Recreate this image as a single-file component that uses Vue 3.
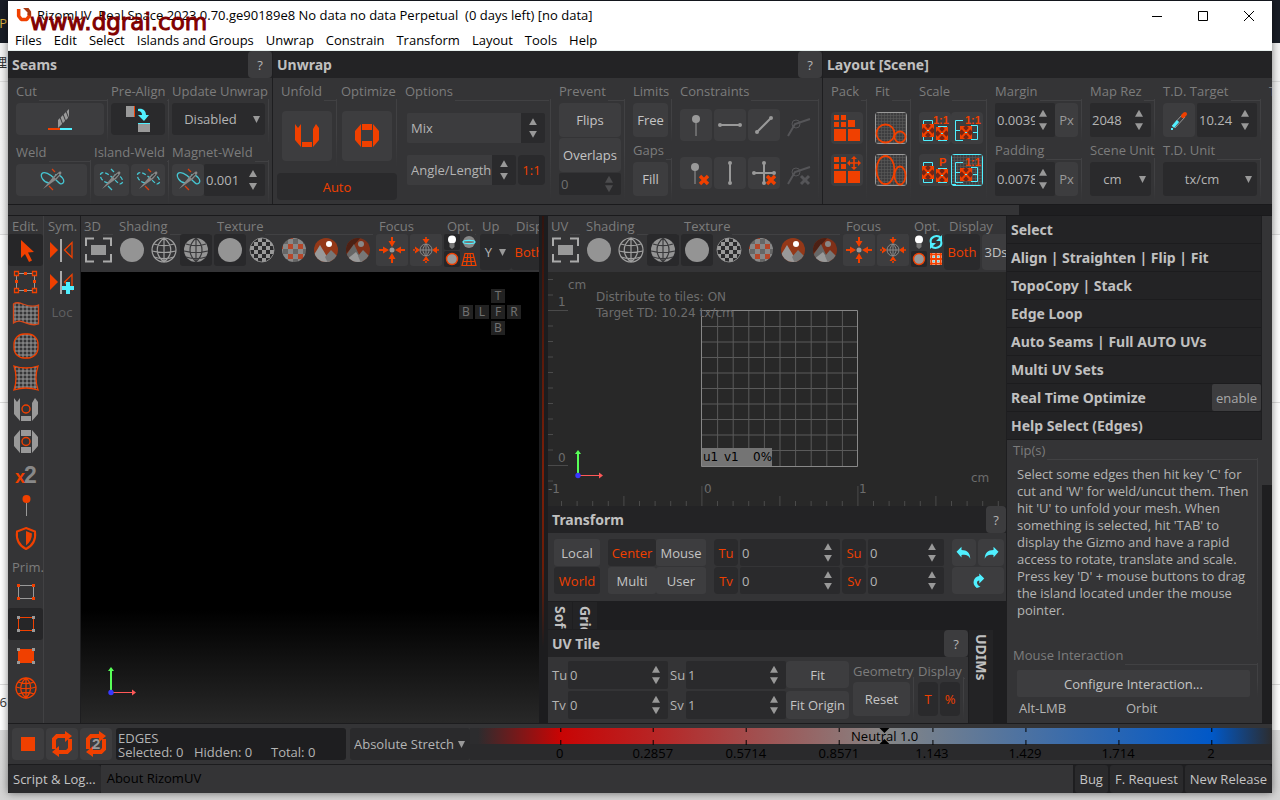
<script setup>
import { h, ref } from 'vue'

const Ico = (p) => h('svg', { class: 'ic', viewBox: p.box || '0 0 32 32', 'aria-hidden': 'true' }, [h('use', { href: '#' + p.n })])
Ico.props = ['n', 'box']

const Spin = (p) => h('div', { class: 'spin' }, [
  h('input', { type: 'text', id: p.id, value: p.value, 'aria-label': p.label, disabled: p.off }),
  h('span', { class: 'arr' }, [
    h('button', { class: 'up', 'aria-label': p.label + ' up', disabled: p.off }),
    h('button', { class: 'down', 'aria-label': p.label + ' down', disabled: p.off })
  ])
])
Spin.props = ['id', 'value', 'label', 'off']

const Drop = (p) => h('div', { class: 'drop' }, [
  h('select', { id: p.id, 'aria-label': p.label }, [h('option', p.value)]),
  h('span', { class: 'tri' })
])
Drop.props = ['id', 'value', 'label']

const menus = ['Files', 'Edit', 'Select', 'Islands and Groups', 'Unwrap', 'Constrain', 'Transform', 'Layout', 'Tools', 'Help']
const constraints = [
  ['c-pin', 'Pin'], ['c-hor', 'Horizontal'], ['c-diag', 'Straight'], ['c-ang', 'Angle'],
  ['c-pinx', 'Unpin'], ['c-ver', 'Vertical'], ['c-crossx', 'Clear'], ['c-angx', 'Clear angle']
]
const editTools = ['t-arrow', 't-box', 't-flag', 't-round', 't-pinch', 't-unfold', 't-opt', 't-x2', 't-pin', 't-shield']
const primTools = ['p-vert', 'p-edge', 'p-face', 'p-globe']
const shading = ['s-solid', 's-wire', 's-both']
const texture = ['s-solid', 'x-check', 'x-color', 'x-img', 'x-img2']
const sections = ['Select', 'Align | Straighten | Flip | Fit', 'TopoCopy | Stack', 'Edge Loop', 'Auto Seams | Full AUTO UVs', 'Multi UV Sets']
const views = [
  { key: '3D', up: true, opts: ['o-lamp', 'o-ring', 'o-ball', 'o-persp'] },
  { key: 'UV', up: false, opts: ['o-lamp', 'o-sync', 'o-ball', 'o-grid'] }
]
const ticks = ['0', '0.2857', '0.5714', '0.8571', '1.143', '1.429', '1.714', '2'].map((t, i) => ({ t, left: 11.2 + i * 11.6 + '%' }))
const lines = Array.from({ length: 9 }, (_, i) => i + 1)
const rulerX = Array.from({ length: 29 }, (_, i) => i)
const rulerY = Array.from({ length: 14 }, (_, i) => i)
const tip = ref("Select some edges then hit key 'C' for cut and 'W' for weld/uncut them. Then hit 'U' to unfold your mesh. When something is selected, hit 'TAB' to display the Gizmo and have a rapid access to rotate, translate and scale. Press key 'D' + mouse buttons to drag the island located under the mouse pointer.")
</script>

<template>
  <div class="desk">
    <svg class="defs" width="0" height="0" aria-hidden="true">
      <defs>
        <pattern id="mesh" width="3" height="3" patternUnits="userSpaceOnUse"><path d="M0 .5H3M.5 0V3" stroke="#5a5a5a" stroke-width=".6" /></pattern>
        <pattern id="mesh4" width="4" height="4" patternUnits="userSpaceOnUse"><path d="M0 1H4M1 0V4" stroke="#999" stroke-width="1" /></pattern>
        <pattern id="chk" width="8" height="8" patternUnits="userSpaceOnUse"><rect width="8" height="8" fill="#2a2a2c" /><path d="M0 0h4v4h-4zM4 4h4v4h-4z" fill="#999" /></pattern>
        <pattern id="chk2" width="10" height="10" patternUnits="userSpaceOnUse"><rect width="10" height="10" fill="#888" /><path d="M0 0h5v5h-5z" fill="#b5472a" /><path d="M5 5h5v5h-5z" fill="#666" /></pattern>
        <clipPath id="disc"><circle cx="16" cy="16" r="12" /></clipPath>

        <g id="logo"><path d="M3 1v8l3 4h6l3-4V6" fill="none" stroke="#f04000" stroke-width="4" stroke-linejoin="bevel" /><path d="M8 0h6l3 4v5l-4-1V5z" fill="#a83810" /></g>
        <g id="knife"><path d="M14 17 25 6v8L14 25z" fill="#999" /><path d="M16 14l3 8M19 11l3 8M22 8l3 8" stroke="#3c3c3e" stroke-width="1" /><path d="M4 25h12v2H4z" fill="#f04000" /><path d="M16 25h12v2H16z" fill="#50f0ff" /></g>
        <g id="align"><path d="M4 3h8v11H4z" fill="#999" /><path d="M12 3h1v11h-1z" fill="#f04000" /><path d="M16 6c5-1 8 2 8 6h3l-5 6-6-6h4c0-2-1-4-4-4z" fill="#50f0ff" /><path d="M16 20h12v1H16z" fill="#50f0ff" /><path d="M16 21h12v8H16z" fill="#999" /></g>
        <g id="needle"><path d="M7 25 18 12l5-4c2-1 3 0 2 2l-4 5z" fill="#888" /><path d="M19 14l4-4" stroke="#38383a" stroke-width="1.200" /></g>
        <g id="weld"><path d="M13 19C7 18 4 12 6 9.500S14 10 19 15s6 6 8 4-1-9-8-8" fill="none" stroke="#46c4d0" stroke-width="1.300" /><path d="M16 5l3 3M13 22l4 4" stroke="#d84010" stroke-width="1.300" /><use href="#needle" /></g>
        <g id="weldc"><path d="M13 19C7 18 4 12 6 9.500S14 10 19 15s6 6 8 4-1-9-8-8" fill="none" stroke="#46c4d0" stroke-width="1.300" stroke-dasharray="4 2" /><path d="M16 5l3 3M13 22l4 4" stroke="#46c4d0" stroke-width="1.300" /><use href="#needle" /></g>
        <g id="weldo"><path d="M13 19C7 18 4 12 6 9.500S14 10 19 15s6 6 8 4-1-9-8-8" fill="none" stroke="#46c4d0" stroke-width="1.300" stroke-dasharray="4 2" /><path d="M16 5l3 3M13 22l4 4" stroke="#d84010" stroke-width="1.300" /><use href="#needle" /></g>
        <g id="unfold"><path d="M4 4l3 4 3-4v23l-6-7zM28 8l-3-4-3 5v18l6-7zM11 22h10v5H11z" /></g>
        <g id="optim"><path d="M4 11l6-7v23l-6-7zM28 11l-6-7v23l6-7zM11 4h10v6H11zM11 21h10v6H11z" /></g>
        <g id="xmark"><path d="M19 19l8 8M27 19l-8 8" stroke="#f04000" stroke-width="3.4" /></g>
        <g id="c-pin"><circle cx="16" cy="10" r="4" fill="#999" /><path d="M16 13v14" stroke="#999" /></g>
        <g id="c-hor"><path d="M6 16h20" stroke="#999" stroke-width="2" /><circle cx="6" cy="16" r="2" fill="#999" /><circle cx="26" cy="16" r="2" fill="#999" /></g>
        <g id="c-ver"><path d="M16 6v20" stroke="#999" stroke-width="2" /><circle cx="16" cy="6" r="2" fill="#999" /><circle cx="16" cy="26" r="2" fill="#999" /></g>
        <g id="c-diag"><path d="M9 23 23 9" stroke="#999" stroke-width="2" /><circle cx="9" cy="23" r="2" fill="#999" /><circle cx="23" cy="9" r="2" fill="#999" /></g>
        <g id="c-ang"><path d="M6 27 13 15l15-5" fill="none" stroke="#555558" stroke-width="2" /><circle cx="14" cy="15" r="4" fill="none" stroke="#555558" /></g>
        <g id="c-pinx"><use href="#c-pin" x="-1" /><use href="#xmark" x="1" /></g>
        <g id="c-crossx"><use href="#c-hor" /><use href="#c-ver" /><use href="#xmark" /></g>
        <g id="c-angx"><use href="#c-ang" /><path d="M19 19l8 8M27 19l-8 8" stroke="#555558" stroke-width="3" /></g>
        <g id="k-pack"><path d="M3 3h5v5H3zM10 3h5v5h-5zM3 10h5v5H3zM10 10h5v5h-5zM17 8h7v7h-7zM3 17h12v12H3zM17 17h12v12H17z" fill="#f04000" /></g>
        <g id="k-pack2"><path d="M3 3h5v5H3zM10 3h5v5h-5zM3 10h5v5H3zM10 10h5v5h-5zM3 17h12v12H3zM17 17h12v12H17z" fill="#f04000" /><path d="M23 3v12M17 9h12" stroke="#f04000" stroke-width="1.6" /><path d="M20 5l3-3 3 3zM20 13l3 3 3-3zM19 6l-3 3 3 3zM27 6l3 3-3 3z" fill="#f04000" /></g>
        <g id="k-fit"><rect x=".5" y=".5" width="31" height="31" fill="url(#mesh)" stroke="#999" /><circle cx="10.500" cy="21.500" r="9" fill="none" stroke="#f04000" stroke-width="1.8" /><circle cx="25" cy="25" r="5.500" fill="none" stroke="#f04000" stroke-width="1.8" /></g>
        <g id="k-fit2"><rect x=".5" y=".5" width="31" height="31" fill="url(#mesh)" stroke="#999" /><ellipse cx="10.500" cy="16" rx="9" ry="14" fill="none" stroke="#f04000" stroke-width="1.8" /><ellipse cx="25" cy="21.500" rx="5.500" ry="9" fill="none" stroke="#f04000" stroke-width="1.8" /></g>
        <g id="exp"><rect width="12" height="13" fill="#742414" /><path d="M1 1l10 11M11 1 1 12" stroke="#f04000" stroke-width="2" /><path d="M0 0h5l-5 5zM12 0v5L7 0zM0 13V8l5 5zM12 13V8l-5 5z" fill="#f04000" /><path d="M5 6h2v1H5z" fill="#50f0ff" /></g>
        <g id="k-sc"><path d="M4.500 12V8.500h9V12M4.500 25v3.500h9V25M19 14.500h9M19 28.500h9" fill="none" stroke="#50f0ff" /><use href="#exp" x="3" y="12" /><use href="#exp" x="17" y="15" /></g>
        <g id="k-sc1"><use href="#k-sc" /><text x="14" y="12" class="mini">1:1</text></g>
        <g id="k-scp"><use href="#k-sc" /><text x="20" y="12" class="mini">P</text></g>
        <g id="k-br"><path d="M12 8.500H4.500v20H12M4.500 18.500H9M20 13.500h6.500v14H20M26.500 20.500H22" fill="none" stroke="#50f0ff" /><use href="#exp" x="9" y="14" /><text x="14" y="12" class="mini">1:1</text></g>
        <g id="k-brf"><rect x=".5" y=".5" width="31" height="31" fill="url(#mesh)" stroke="#50f0ff" /><use href="#k-br" /><path d="M0 30h5v2H0z" fill="#50f0ff" /></g>
        <g id="dropper"><path d="M9 22l10-11M12 24l10-11" stroke="#aaa" stroke-width=".8" /><path d="M10 23l5-6" stroke="#50f0ff" stroke-width="3" /><path d="M8 25h2" stroke="#50f0ff" stroke-width="2" /><path d="M20 12l2-2" stroke="#f04000" stroke-width="4" stroke-linecap="round" /></g>
        <g id="t-arrow"><path d="M11 6l13 12-6 .5 4 8-3 1.500-4-8-4 4z" fill="#f04000" /></g>
        <g id="t-box"><path d="M6.500 7.500h18v17h-18z" fill="none" stroke="#999" /><g fill="#343436" stroke="#f04000" stroke-width="1.300"><path d="M4.500 5.500h4v4h-4zM22.500 5.500h4v4h-4zM4.500 22.500h4v4h-4zM22.500 22.500h4v4h-4z" /></g><path d="M14 6h3v3h-3zM14 23h3v3h-3zM5 14h3v3H5zM23 14h3v3h-3z" fill="#f04000" /></g>
        <g id="t-flag"><path d="M3.500 6C10 1 17 12 28.500 7v19C18 30 12 19 3.500 25z" fill="url(#mesh4)" stroke="#d84818" stroke-width="1.300" /></g>
        <g id="t-round"><rect x="4" y="4" width="24" height="24" rx="10" fill="url(#mesh4)" stroke="#f04000" stroke-width="1.300" /></g>
        <g id="t-pinch"><path d="M4 4q12 4 24 0-4 12 0 24-12-4-24 0 4-12 0-24z" fill="url(#mesh4)" stroke="#f04000" stroke-width="1.300" /></g>
        <g id="t-unfold"><use href="#unfold" fill="#999" /><circle cx="16" cy="15" r="4" fill="none" stroke="#f04000" stroke-width="1.400" /></g>
        <g id="t-opt"><use href="#optim" fill="#999" /><circle cx="16" cy="15.500" r="4" fill="none" stroke="#f04000" stroke-width="1.400" /></g>
        <g id="t-x2"><text x="5" y="25" font-family="Liberation Sans" font-weight="700" font-size="18" fill="#f04000">x</text><text x="14" y="25" font-family="Liberation Sans" font-weight="700" font-size="23" fill="#888">2</text></g>
        <g id="t-pin"><circle cx="16.500" cy="9" r="4" fill="#f04000" /><path d="M16.500 13v13" stroke="#999" /></g>
        <g id="t-shield"><path d="M16 6l9 3.500c1 8-2 14-9 17.500-7-3.500-10-9.500-9-17.500z" fill="none" stroke="#f04000" stroke-width="2" /><path d="M16 9l6 2.500c0 5-2 9-6 12z" fill="#f04000" /></g>
        <g id="p-vert"><path d="M8.500 9.500h15v13h-15z" fill="none" stroke="#999" /><path d="M7 8h3v3H7zM22 8h3v3h-3zM7 21h3v3H7zM22 21h3v3h-3z" fill="#f04000" /></g>
        <g id="p-edge"><path d="M8.500 9.500h15v13h-15z" fill="none" stroke="#f04000" /><path d="M7 8h3v3H7zM22 8h3v3h-3zM7 21h3v3H7zM22 21h3v3h-3z" fill="#999" /></g>
        <g id="p-face"><path d="M8 9h16v14H8z" fill="#f04000" /><path d="M7 8h3v3H7zM22 8h3v3h-3zM7 21h3v3H7zM22 21h3v3h-3z" fill="#999" /></g>
        <g id="p-globe"><g fill="none" stroke="#f04000" stroke-width="1.300"><circle cx="16" cy="16" r="10" /><path d="M16 6c-7 6-7 14 0 20M16 6c7 6 5 15 0 20M16 6v20M6 15c7 2 14 2 20 0M8 10c5 2 12 2 16 0M8 22c5-2 12-2 16 0" /></g></g>
        <g id="sym"><path d="M4 8l8 8-8 8z" fill="#f04000" /><path d="M14 5h2v23h-2z" fill="#aaa" /><path d="M26 8.500v15L18.500 16z" fill="none" stroke="#f04000" stroke-width="1.300" /></g>
        <g id="symadd"><use href="#sym" /><path d="M20 16h4v4h4v4h-4v4h-4v-4h-4v-4h4z" fill="#50f0ff" /></g>
        <g id="s-fit"><path d="M4 12V4.500h8M21 4.500h8V12M4 20v7.500h8M21 27.500h8V20" fill="none" stroke="#aaa" stroke-width="2" /><path d="M9 11h15v10H9z" fill="#999" /></g>
        <g id="s-solid"><circle cx="16" cy="16" r="12" fill="#949494" /></g>
        <g id="s-wire"><g fill="none" stroke="#a0a0a0" stroke-width="1.200"><circle cx="16" cy="16" r="12" /><path d="M16 4c-9 7-9 17 0 24M16 4c9 7 9 17 0 24M16 4v24M4 17c8 2 16 2 24 0M6 10c6 2 14 2 20 0M6 23c6 2 14 2 20 0" /></g></g>
        <g id="s-both"><circle cx="16" cy="16" r="12" fill="#949494" /><path d="M16 4c-8 7-8 17 0 24M16 4c8 7 8 17 0 24M16 4v24M4 17c8 2 16 2 24 0M6 10c6 2 14 2 20 0M6 23c6 2 14 2 20 0" fill="none" stroke="#3a3a3c" stroke-width="1.200" /></g>
        <g id="x-check"><circle cx="16" cy="16" r="12" fill="url(#chk)" stroke="#999" stroke-width=".8" /></g>
        <g id="x-color"><circle cx="16" cy="16" r="12" fill="url(#chk2)" /></g>
        <g id="x-img"><g clip-path="url(#disc)"><path d="M0 0h32v32H0z" fill="#943818" /><path d="M2 24l8-13 12 20H4z" fill="#999" /><path d="M15 23l6-7 9 9-5 6h-6z" fill="#777" /><circle cx="19" cy="10" r="3" fill="#fff" /></g></g>
        <g id="x-img2"><g clip-path="url(#disc)"><path d="M0 0h32v32H0z" fill="#803018" /><path d="M0 24 22 0H0z" fill="#4c2014" /><path d="M2 24l10-14 10 21H4z" fill="#666" /><path d="M4 26l10-8 8 12z" fill="#999" /><path d="M16 22l5-6 9 9-5 6h-5z" fill="#777" /><circle cx="19" cy="10" r="3" fill="#888" /></g></g>
        <g id="arrows4"><path d="M16 3v5M16 24v5M3 16h5M24 16h5" stroke="#f04000" stroke-width="2" /><path d="M12.500 7h7L16 13zM12.500 25h7L16 19zM7 12.500v7L13 16zM25 12.500v7L19 16z" fill="#f04000" /></g>
        <g id="f-pt"><use href="#arrows4" /><circle cx="16" cy="16" r="2.500" fill="#999" /></g>
        <g id="f-obj"><path d="M12.500 5h7L16 10zM12.500 27h7L16 22zM5 12.500v7L10 16zM27 12.500v7L22 16zM3 15.200h3v1.600H3zM26 15.200h3v1.600h-3zM15.200 3h1.600v3h-1.600zM15.200 26h1.600v3h-1.600z" fill="#f04000" /><g fill="none" stroke="#888"><circle cx="16" cy="16" r="6" /><path d="M10 16h12M16 10v12M16 10c-4 4-4 8 0 12M16 10c4 4 4 8 0 12" /></g></g>
        <g id="o-lamp"><circle cx="8" cy="5.500" r="4" fill="#fff" /><path d="M5.500 9h5v4l-2.500 2-2.500-2z" fill="#777" /></g>
        <g id="o-ring"><circle cx="8" cy="8" r="6" fill="#888" /><ellipse cx="8" cy="8" rx="6" ry="1.600" fill="#777" stroke="#50f0ff" stroke-width="1.300" /></g>
        <g id="o-ball"><circle cx="8" cy="8" r="5.500" fill="#999" stroke="#f04000" stroke-width="1.400" /></g>
        <g id="o-persp"><path d="M4 2.500h8l3 12H1zM3 6.500h10M2 10.500h12M7 2 5.500 14.500M9 2l1.500 12.500" fill="none" stroke="#f04000" stroke-width="1.200" /></g>
        <g id="o-sync"><path d="M3 9C1 3 9 0 13 4M13 7c2 6-6 9-10 5" fill="none" stroke="#50f0ff" stroke-width="2" /><path d="M14 1v6H8zM2 15V9h6z" fill="#50f0ff" /></g>
        <g id="o-grid"><path d="M2 2h12v12H2z" fill="#e8e0e0" /><path d="M3.300 2v12M8 2v12M12.700 2v12M2 3.300h12M2 8h12M2 12.700h12" stroke="#f04000" stroke-width="1.800" /><path d="M5 5h1.500v1.500H5zM9.500 5H11v1.500H9.500zM5 9.500h1.500V11H5zM9.500 9.500H11V11H9.500z" fill="#50d8e8" /></g>
        <g id="undo"><path d="M4 14l8-8v5c9 0 14 5 14 14-3-6-7-7-14-6v4z" fill="#50f0ff" /></g>
        <g id="redo"><path d="M28 14l-8-8v5c-9 0-14 5-14 14 3-6 7-7 14-6v4z" fill="#50f0ff" /></g>
        <g id="reset"><path d="M26 12l-8-8v4c-9 1-13 13-4 19l6-2c-7-3-7-10-2-10v5z" fill="#50f0ff" /></g>
        <g id="r-stop"><path d="M9 9h14v14H9z" fill="#f04000" /></g>
        <g id="r-loop"><path d="M8 21V11l3-3h9M24 11v10l-3 3h-9" fill="none" stroke="#f04000" stroke-width="4" /><path d="M19 3l7 5-7 6zM13 18l-7 6 7 5z" fill="#f04000" /></g>
        <g id="r-loop2"><use href="#r-loop" /><text x="12" y="21" font-family="Liberation Sans" font-weight="700" font-size="15" fill="#999">2</text></g>
        <g id="axis"><path d="M5 29V7" stroke="#58ff58" stroke-width="2" /><path d="M2 8l3-4 3 4z" fill="#58ff58" /><path d="M5 29.500h22" stroke="#ff5858" /><path d="M26 26.500l4 3-4 3z" fill="#ff5858" /><circle cx="5" cy="29.500" r="2.700" fill="#3838ff" /></g>
      </defs>
    </svg>

    <div class="back"><span class="b1">P</span><span class="b2">理</span><span class="b3">6</span></div>

    <div class="win">
      <header class="title">
        <Ico n="logo" box="0 0 18 18" class="logo" />
        <span class="cap">RizomUV&nbsp; Real Space 2023.0.70.ge90189e8 No data no data Perpetual&nbsp; (0 days left) [no data]</span>
        <button aria-label="Minimize"><svg viewBox="0 0 10 10"><path d="M0 5.500h10" /></svg></button>
        <button aria-label="Maximize"><svg viewBox="0 0 10 10"><path d="M.5.500h9v9h-9z" /></svg></button>
        <button aria-label="Close"><svg viewBox="0 0 10 10"><path d="M0 0l10 10M10 0 0 10" /></svg></button>
        <span class="mark">www.dgrai.com</span>
      </header>
      <nav class="menu"><button v-for="m in menus" :key="m">{{ m }}</button></nav>

      <div class="ribbon">
        <section class="sec seams">
          <div class="head"><h2>Seams</h2><button class="q">?</button></div>
          <div class="body">
            <div class="row">
              <div class="grp cut"><span class="gl">Cut</span><button class="b h32" aria-label="Cut"><Ico n="knife" /></button></div>
              <div class="grp pre"><span class="gl">Pre-Align</span><button class="b h32 on" aria-label="Pre-Align"><Ico n="align" /></button></div>
              <div class="grp fill"><label class="gl" for="upd">Update Unwrap</label><Drop id="upd" value="Disabled" class="h32" /></div>
            </div>
            <div class="row">
              <div class="grp weld"><span class="gl">Weld</span><button class="b h32" aria-label="Weld"><Ico n="weld" /></button></div>
              <div class="grp iw"><span class="gl">Island-Weld</span><div class="pair"><button class="b h32" aria-label="Island weld"><Ico n="weldc" /></button><button class="b h32" aria-label="Island weld cut"><Ico n="weldo" /></button></div></div>
              <div class="grp fill"><label class="gl" for="mag">Magnet-Weld</label><div class="pair tight"><button class="b h32 w32" aria-label="Magnet weld"><Ico n="weld" /></button><Spin id="mag" label="Magnet-Weld" value="0.001" class="h32 fill" /></div></div>
            </div>
          </div>
        </section>

        <section class="sec unwrap">
          <div class="head"><h2>Unwrap</h2><button class="q">?</button></div>
          <div class="body cols">
            <div class="uo">
              <div class="row">
                <div class="grp g56"><span class="gl">Unfold</span><button class="b big" aria-label="Unfold"><Ico n="unfold" /></button></div>
                <div class="grp g56"><span class="gl">Optimize</span><button class="b big" aria-label="Optimize"><Ico n="optim" /></button></div>
              </div>
              <button class="b auto on">Auto</button>
            </div>
            <div class="grp opt"><span class="gl">Options</span>
              <Spin label="Mix" value="Mix" class="h30 lite" />
              <div class="pair two"><Spin label="Angle/Length" value="Angle/Length" class="h30 lite fill" /><button class="b on h30 one">1:1</button></div>
            </div>
            <div class="grp prev"><span class="gl">Prevent</span>
              <div class="pv"><button class="b h34">Flips</button><button class="b h34">Overlaps</button>
              <Spin label="Prevent" value="0" class="h22" :off="true" /></div>
            </div>
            <div class="lim">
              <div class="grp"><span class="gl">Limits</span><button class="b h34">Free</button></div>
              <div class="grp"><span class="gl">Gaps</span><button class="b h34">Fill</button></div>
            </div>
            <div class="grp fill"><span class="gl">Constraints</span>
              <div class="cgrid"><button v-for="(c, i) in constraints" :key="c[0]" class="b h32" :class="{ flat: i % 4 === 3 }" :aria-label="c[1]"><Ico :n="c[0]" /></button></div>
            </div>
          </div>
        </section>

        <section class="sec lay">
          <div class="head"><h2>Layout [Scene]</h2></div>
          <div class="body cols">
            <div class="grp g36"><span class="gl">Pack</span><div class="stack"><button class="b h32" aria-label="Pack"><Ico n="k-pack" /></button><button class="b h32" aria-label="Pack move"><Ico n="k-pack2" /></button></div></div>
            <div class="grp g36"><span class="gl">Fit</span><div class="stack"><button class="b h32" aria-label="Fit"><Ico n="k-fit" /></button><button class="b h32" aria-label="Fit stretch"><Ico n="k-fit2" /></button></div></div>
            <div class="grp g68"><span class="gl">Scale</span><div class="stack dual"><button class="b h32" aria-label="Scale 1:1"><Ico n="k-sc1" /></button><button class="b h32" aria-label="Scale group 1:1"><Ico n="k-br" /></button><button class="b h32" aria-label="Scale pack"><Ico n="k-scp" /></button><button class="b h32" aria-label="Scale tile"><Ico n="k-brf" /></button></div></div>
            <div class="duo g87">
              <div class="grp"><label class="gl" for="mar">Margin</label><div class="pair tight"><Spin id="mar" label="Margin" value="0.0039" class="h34 fill" /><button class="b h34 px">Px</button></div></div>
              <div class="grp"><label class="gl" for="pad">Padding</label><div class="pair tight"><Spin id="pad" label="Padding" value="0.0078" class="h34 fill" /><button class="b h34 px">Px</button></div></div>
            </div>
            <div class="duo g65">
              <div class="grp"><label class="gl" for="rez">Map Rez</label><Spin id="rez" label="Map Rez" value="2048" class="h34" /></div>
              <div class="grp"><label class="gl" for="scu">Scene Unit</label><Drop id="scu" value="cm" class="h34" /></div>
            </div>
            <div class="duo g98">
              <div class="grp"><label class="gl" for="tdt">T.D. Target</label><div class="pair"><button class="b h34 w32" aria-label="Pick density"><Ico n="dropper" /></button><Spin id="tdt" label="T.D. Target" value="10.24" class="h34 fill" /></div></div>
              <div class="grp"><label class="gl" for="tdu">T.D. Unit</label><Drop id="tdu" value="tx/cm" class="h34" /></div>
            </div>
            <div class="grp g36"><span class="gl">Tex</span></div>
          </div>
        </section>
      </div>
      <div class="hscroll"><i /></div>

      <main class="main">
        <aside class="tools">
          <div class="tcol edit">
            <span class="tl">Edit.</span>
            <button v-for="(t, i) in editTools" :key="t" class="tb" :class="{ on: i === 0 }" :aria-label="t"><Ico :n="t" /></button>
            <span class="tl prim">Prim.</span>
            <button v-for="(t, i) in primTools" :key="t" class="tb" :class="{ on: i === 1 }" :aria-label="t"><Ico :n="t" /></button>
          </div>
          <div class="tcol">
            <span class="tl">Sym.</span>
            <button class="tb" aria-label="Symmetry"><Ico n="sym" /></button>
            <button class="tb" aria-label="Add symmetry"><Ico n="symadd" /></button>
            <span class="loc">Loc</span>
          </div>
        </aside>

        <template v-for="v in views" :key="v.key">
          <div class="view">
            <div class="vbar">
              <div class="vg v1"><span class="gl">{{ v.key }}</span><div class="vi"><button class="vb" aria-label="Fit view"><Ico n="s-fit" /></button></div></div>
              <div class="vg v3"><span class="gl">Shading</span><div class="vi"><button v-for="(s, i) in shading" :key="i" class="vb" :class="{ on: i === 2 }" :aria-label="'Shading ' + (i + 1)"><Ico :n="s" /></button></div></div>
              <div class="vg v5"><span class="gl">Texture</span><div class="vi"><button v-for="(s, i) in texture" :key="i" class="vb" :class="{ on: i === 0 }" :aria-label="'Texture ' + (i + 1)"><Ico :n="s" /></button></div></div>
              <div class="vg v2"><span class="gl">Focus</span><div class="vi gap"><button class="vb lit" aria-label="Focus selection"><Ico n="f-pt" /></button><button class="vb lit" aria-label="Focus object"><Ico n="f-obj" /></button></div></div>
              <div class="vg vo"><span class="gl">Opt.</span><div class="quad"><button v-for="(o, i) in v.opts" :key="o" :class="{ on: i === 2 || (v.up && i === 0) }" :aria-label="o"><Ico :n="o" box="0 0 16 16" /></button></div></div>
              <div v-if="v.up" class="vg vu"><label class="gl" for="axisup">Up</label><Drop id="axisup" value="Y" class="h36" /></div>
              <div class="vg vd"><span class="gl">Display</span><div class="vi gap"><button class="b on h36 both">Both</button><button class="b h36 ds">3Ds</button></div></div>
            </div>
            <div v-if="v.up" class="scene">
              <div class="cube"><span class="c1">T</span><span class="c2">B</span><span>L</span><span>F</span><span>R</span><span class="c1">B</span></div>
              <svg class="axis3" viewBox="0 0 32 34"><use href="#axis" /></svg>
            </div>
            <template v-else>
              <svg class="uv" aria-label="UV view">
                <g stroke="#4a4a4a">
                  <path v-for="i in rulerY" :key="'y' + i" :d="`M0 ${7.500 + i * 15.500}h${i === 2 || i === 12 ? 20 : 5}`" />
                  <path v-for="i in rulerX" :key="'x' + i" :d="`M${13.500 + i * 15.600} 234v${i === 9 || i === 19 ? -20 : i % 5 === 4 ? -10 : -5}`" />
                </g>
                <g stroke="#5a5a5a"><path v-for="i in lines" :key="i" :d="`M${154 + i * 15.600} 39v155M154 ${39 + i * 15.500}h155`" /></g>
                <path d="M153.500 38.500h156v156h-156z" fill="none" stroke="#888" />
                <g class="ut">
                  <text x="20" y="17">cm</text><text x="10" y="34">1</text><text x="10" y="190">0</text><text x="0" y="221">-1</text>
                  <text x="156" y="221">0</text><text x="311" y="221">1</text><text x="423" y="210">cm</text>
                  <text x="48" y="29">Distribute to tiles: ON</text><text x="48" y="45">Target TD: 10.24 tx/cm</text>
                </g>
                <path d="M154 176h70v18h-70z" fill="#747474" />
                <g class="ut dk"><text x="155" y="189">u1</text><text x="176" y="189">v1</text><text x="205" y="189">0%</text></g>
                <svg x="25" y="174" width="32" height="34"><use href="#axis" /></svg>
              </svg>
              <section>
                <div class="head"><h2>Transform</h2><button class="q narrow">?</button></div>
                <div class="xf">
                  <div class="bg2 one1"><button class="b">Local</button><button class="b on">World</button></div>
                  <div class="bg2 two2"><button class="b on">Center</button><button class="b">Mouse</button><button class="b">Multi</button><button class="b">User</button></div>
                  <div class="xs wide"><button class="b on">Tu</button><Spin label="Tu" value="0" /><button class="b on">Tv</button><Spin label="Tv" value="0" /></div>
                  <div class="xs"><button class="b on">Su</button><Spin label="Su" value="0" /><button class="b on">Sv</button><Spin label="Sv" value="0" /></div>
                  <div class="ur"><button class="b" aria-label="Undo"><Ico n="undo" /></button><button class="b" aria-label="Redo"><Ico n="redo" /></button><button class="b wide" aria-label="Reset transform"><Ico n="reset" /></button></div>
                </div>
              </section>
              <div class="vtabs"><button>Soft</button><button>Grid</button></div>
              <div class="tile">
                <section class="tmain">
                  <div class="head"><h2>UV Tile</h2><button class="q">?</button></div>
                  <div class="tbody">
                    <div class="tn"><label for="ttu">Tu</label><Spin id="ttu" label="Tile Tu" value="0" /><label for="ttv">Tv</label><Spin id="ttv" label="Tile Tv" value="0" /></div>
                    <div class="tn"><label for="tsu">Su</label><Spin id="tsu" label="Tile Su" value="1" /><label for="tsv">Sv</label><Spin id="tsv" label="Tile Sv" value="1" /></div>
                    <div class="tf"><button class="b">Fit</button><button class="b">Fit Origin</button></div>
                    <div class="grp geo"><span class="gl">Geometry</span><button class="b h34">Reset</button></div>
                    <div class="grp dis"><span class="gl">Display</span><div class="pair"><button class="b on h34">T</button><button class="b on h34">%</button></div></div>
                  </div>
                </section>
                <button class="udim">UDIMs</button>
              </div>
            </template>
          </div>
          <div v-if="v.up" class="split" />
        </template>

        <aside class="right">
          <button v-for="s in sections" :key="s" class="acc">{{ s }}</button>
          <div class="acc rto">Real Time Optimize<button class="b">enable</button></div>
          <button class="acc">Help Select (Edges)</button>
          <div class="help">
            <div class="grp tips"><span class="gl">Tip(s)</span><p>{{ tip }}</p></div>
            <div class="grp mi"><span class="gl">Mouse Interaction</span><button class="b">Configure Interaction...</button></div>
            <div class="keys"><span>Alt-LMB</span><span>Orbit</span></div>
          </div>
        </aside>
        <div class="vscroll"><i /></div>
      </main>

      <div class="status">
        <button class="b w32 h32" aria-label="Stop"><Ico n="r-stop" /></button>
        <button class="b w32 h32" aria-label="Loop"><Ico n="r-loop" /></button>
        <button class="b w32 h32" aria-label="Loop twice"><Ico n="r-loop2" /></button>
        <div class="info"><div>EDGES</div><div class="cnt"><span>Selected: 0</span><span>Hidden: 0</span><span>Total: 0</span></div></div>
        <Drop label="Stretch" value="Absolute Stretch" class="h32 stretch" />
        <div class="ramp">
          <div class="bar"><span class="neutral">Neutral 1.0</span></div>
          <span v-for="t in ticks" :key="t.t" class="tick" :style="{ left: t.left }">{{ t.t }}</span>
        </div>
      </div>
      <footer class="foot"><button class="b">Script &amp; Log...</button><span class="about">About RizomUV</span><button class="b">Bug</button><button class="b">F. Request</button><button class="b">New Release</button></footer>
    </div>
  </div>
</template>

<style>
html, body { margin: 0; overflow: hidden; }
.mini { font: 700 11px "Liberation Sans", sans-serif; fill: #f04000; }
</style>

<style scoped>
* { box-sizing: border-box; }
.desk { position: relative; height: 100vh; padding: 1px 8px 7px; display: flex; background: linear-gradient(#191d26 43px, #f4f4f4 43px, #f4f4f4 81px, #ddd 81px, #ddd 82px, #f4f4f4 82px, #f6f6f6 234px, #ddd 234px, #ddd 235px, #fff 235px, #fff 402px, #ddd 402px, #ddd 403px, #fff 403px, #fff 684px, #ddd 684px, #ddd 685px, #fff 685px, #fff 730px, #dcdcdc 730px, #d4d4d4); font: 13px/16px "Open Sans", "Noto Sans CJK SC", sans-serif; color: #b4b4b4; }
.defs { position: absolute; }
.back span { position: absolute; right: calc(100% - 7px); color: #333; white-space: nowrap; }
.back .b1 { top: 15px; color: #d8b040; }
.back .b2 { top: 54px; }
.back .b3 { top: 694px; }
.win { position: relative; flex: 1; min-width: 0; display: flex; flex-direction: column; background: #1e1e20; box-shadow: 0 0 8px rgba(0, 0, 0, .5); }
button { font: inherit; color: inherit; border: 0; padding: 0; margin: 0; background: none; white-space: nowrap; }
h2 { margin: 0; font: 700 14px/28px "Noto Sans", sans-serif; color: #c0c0c0; flex: 1; }
.ic { display: block; width: 32px; height: 32px; flex: none; }

.title { position: relative; height: 30px; display: flex; align-items: center; background: #fff; color: #000; padding-left: 8px; }
.title .logo { width: 16px; height: 16px; }
.cap { flex: 1; padding: 0 0 2px 5px; }
.title button { width: 46px; height: 30px; display: grid; place-items: center; }
.title button svg { width: 10px; height: 10px; fill: none; stroke: #000; }
.mark { position: absolute; left: 22px; top: 8px; font: 23px/26px "DejaVu Sans", sans-serif; color: #800000; -webkit-text-stroke: 1px #800000; }
.menu { height: 20px; background: #fff; color: #000; display: flex; gap: 12px; padding: 0 7px 2px; border-bottom: 1px solid #e8f0ee; }

.ribbon { display: flex; gap: 1px; height: 153px; overflow: hidden; }
.sec { background: #343436; display: flex; flex-direction: column; }
.seams { width: 264px; }
.unwrap { width: 549px; }
.lay { flex: 1; min-width: 0; overflow: hidden; }
.head { height: 27px; background: #232325; display: flex; padding-left: 4px; flex: none; }
.q { width: 24px; background: #3c3c3e; border-radius: 4px; }
.q.narrow { width: 20px; }
.body { padding: 5px 3px 0 8px; }
.cols { display: flex; gap: 8px; }
.seams .row { height: 61px; gap: 3px; }
.row { display: flex; gap: 4px; }
.grp { display: flex; flex-direction: column; position: relative; padding-right: 4px; align-items: stretch; }
.grp::before { content: ""; position: absolute; right: 0; top: 16px; bottom: 0; width: 1px; background: linear-gradient(#414143 50%, transparent); }
.gl { display: flex; height: 20px; line-height: 17px; color: #7c7c7c; white-space: nowrap; flex: none; }
.gl::after { content: ""; flex: 1; height: 17px; margin: 0 -4px 0 2px; border-bottom: 1px solid #414143; }
.fill { flex: 1; min-width: 0; }
.cut { width: 92px; }
.pre { width: 58px; }
.weld { width: 75px; }
.iw { width: 75px; }
.b { background: #3d3d3f; border-radius: 4px; display: grid; place-items: center; color: #c4c4c4; overflow: hidden; }
.b.on { background: #2a2a2c; color: #f04000; }
.b.flat { background: none; }
.h22 { height: 22px; } .h30 { height: 30px; } .h32 { height: 32px; } .h34 { height: 34px; } .h36 { height: 36px; }
.w32 { width: 32px; flex: none; }
.pair { display: flex; gap: 2px; }
.pair.tight { gap: 0; }
.pair > .b:not(.w32):not(.px):not(.one) { flex: 1; }
.big { height: 50px; width: 50px; margin: 8px 0 0 1px; }
.big .ic { fill: #f04000; }
.g56 { width: 56px; height: 84px; }
.uo { width: 116px; }
.auto { width: 120px; height: 27px; margin: 6px 0 0 -4px; }
.opt { width: 146px; gap: 12px; padding-right: 6px; }
.opt .gl { height: 18px; }
.opt > .spin, .two { margin-left: 2px; }
.one { width: 27px; }
.prev { width: 66px; }
.pv { display: grid; gap: 1px; }
.lim { width: 39px; }
.lim .grp, .duo .grp { height: 59px; }
.cgrid { display: grid; grid-template-columns: repeat(4, 32px); gap: 16px 2px; padding-top: 6px; }
.g36 { width: 36px; flex: none; }
.g68 { width: 68px; flex: none; }
.g87 { width: 87px; flex: none; }
.g65 { width: 65px; flex: none; }
.g98 { width: 98px; flex: none; }
.stack { display: grid; gap: 10px 0; padding-top: 9px; }
.dual { grid-template-columns: 32px 32px; }
.px { width: 23px; color: #999; }

.spin { display: flex; background: #2a2a2c; border-radius: 2px; min-width: 0; }
.spin :deep(input) { flex: 1; min-width: 0; width: 0; border: 0; padding: 0 0 0 2px; background: none; font: inherit; color: #b4b4b4; outline: 0; }
.spin :deep(input:disabled) { color: #707070; }
.lite { background: linear-gradient(to left, #2a2a2c 24px, #3c3c3e 24px); }
.lite :deep(input) { padding-left: 4px; }
.spin :deep(.arr) { width: 20px; padding-right: 4px; box-sizing: border-box; flex: none; display: flex; flex-direction: column; justify-content: space-evenly; align-items: center; }
.spin :deep(.arr button) { width: 8px; height: 7px; border: 0; padding: 0; background: #999; clip-path: polygon(50% 0, 100% 100%, 0 100%); }
.spin :deep(.arr .down) { clip-path: polygon(0 0, 100% 0, 50% 100%); }
.spin :deep(.arr button:disabled) { background: #4c4c4e; }
.drop { position: relative; display: flex; background: #2a2a2c; border-radius: 3px; }
.drop :deep(select) { width: 100%; appearance: none; border: 0; background: none; color: #b4b4b4; font: inherit; padding: 0 20px 0 4px; text-align: center; text-align-last: center; outline: 0; }
.drop :deep(.tri) { position: absolute; right: 5px; top: calc(50% - 3px); width: 7px; height: 7px; background: #999; clip-path: polygon(0 0, 100% 0, 50% 100%); pointer-events: none; }

.hscroll { height: 12px; border: solid #1a1a1c; border-width: 1px 0; flex: none; }
.hscroll i { display: block; width: 80%; height: 10px; background: #343436; }

.main { flex: 1; min-height: 0; display: grid; grid-template-columns: 73px minmax(0, 1fr) 9px minmax(0, 1fr) 256px 10px; grid-template-rows: minmax(0, 1fr); }
.tools { display: flex; background: #343436; border-right: 1px solid #1e1e20; }
.tcol { width: 36px; display: flex; flex-direction: column; }
.edit { border-right: 1px solid #414143; }
.tl { height: 18px; line-height: 20px; padding-left: 4px; color: #7c7c7c; white-space: nowrap; }
.tl.prim { height: 22px; line-height: 26px; }
.tb { height: 32px; width: 35px; border-radius: 3px; display: grid; place-items: center; }
.tb.on { background: #262628; }
.loc { line-height: 28px; text-align: center; color: #606062; }

.view { min-width: 0; display: flex; flex-direction: column; overflow: hidden; }
.vbar { height: 56px; background: #343436; display: flex; gap: 4px; flex: none; overflow: hidden; padding-left: 1px; }
.vg { flex: none; position: relative; }
.vg .gl { height: 18px; line-height: 20px; padding-left: 2px; }
.vg .gl::after { height: 18px; margin-right: 0; }
.v1 { width: 31px; } .v3 { width: 94px; } .v5 { width: 158px; } .v2 { width: 64px; } .vo { width: 31px; } .vu { width: 30px; }
.vi { display: flex; margin: 0 -3px 0 0; }
.v3 .vi, .v5 .vi, .v2 .vi { margin-left: -1px; }
.vi.gap { gap: 2px; }
.vd .vi { margin-left: -3px; }
.vb { width: 32px; height: 32px; border-radius: 3px; }
.vb.on { background: #29292b; }
.vb.lit { background: #3d3d3f; }
.quad { display: grid; grid-template-columns: 16px 16px; gap: 1px; margin-left: -1px; }
.quad button { width: 16px; height: 16px; border-radius: 2px; }
.quad button.on { background: #262628; }
.quad .ic { width: 16px; height: 16px; }
.vu .drop { width: 31px; }
.vu .drop :deep(select) { padding: 0 14px 0 0; }
.both { width: 36px; } .ds { width: 28px; }
.scene { flex: 1; position: relative; background: linear-gradient(#000 75%, #282828); }
.cube { position: absolute; right: 18px; top: 17px; display: grid; grid-template-columns: repeat(4, 14px); gap: 2px; }
.cube span { height: 14px; background: #222; color: #707070; text-align: center; font: 12px/14px "Noto Sans", sans-serif; }
.cube .c1 { grid-column: 3; }
.cube .c2 { grid-column: 1; }
.axis3 { position: absolute; left: 25px; bottom: 26px; width: 32px; height: 34px; }
.split { background: linear-gradient(to right, #1c1c1e 3px, transparent 3px, transparent 5px, #1c1c1e 5px), linear-gradient(#30140f, #7c1e08 50%, #6a1c08 70%, #1c1c1e 85%); }
.uv { display: block; width: 100%; flex: 1; min-height: 0; background: #282828; }
.ut { font: 12px "DejaVu Sans", sans-serif; fill: #6c6c6c; }
.ut.dk { fill: #000; }
.xf { height: 68px; background: #343436; display: flex; gap: 8px; padding: 6px 2px 0 6px; }
.xf > div { height: 56px; display: grid; grid-template-rows: 27px 27px; gap: 1px 0; flex: none; }
.bg2 .b { border-radius: 3px; }
.one1 { width: 46px; }
.two2 { width: 98px; grid-template-columns: 48px 50px; }
.xs { grid-template-columns: 24px 76px; column-gap: 2px !important; }
.xs.wide { grid-template-columns: 24px 100px; margin-right: -6px; }
.ur { grid-template-columns: 24px 26px; column-gap: 2px !important; }
.ur .wide { grid-column: span 2; }
.ur .ic { width: 20px; height: 20px; }
.vtabs { height: 29px; display: flex; gap: 1px; overflow: hidden; flex: none; padding-top: 1px; }
.vtabs button, .udim { writing-mode: vertical-rl; font: 700 14px/20px "Noto Sans", sans-serif; color: #c0c0c0; width: 24px; background: #232325; text-align: left; padding-top: 4px; }
.vtabs button { height: 27px; overflow: hidden; display: flex; justify-content: flex-start; align-items: center; }
.tile { display: flex; height: 93px; flex: none; }
.tmain { width: 420px; background: #343436; }
.udim { height: 93px; margin-left: 1px; display: flex; align-items: center; justify-content: flex-start; }
.tbody { display: flex; padding: 4px 4px 0; }
.tbody > * { flex: none; }
.tn { display: grid; grid-template: 28px 28px / 16px 100px; gap: 2px 0; align-items: center; margin-right: 2px; }
.tn + .tn { margin-right: 0; }
.tn .spin { height: 28px; }
.tf { width: 63px; display: grid; grid-template-rows: 27px 28px; gap: 3px; margin-right: 4px; }
.geo { width: 61px; margin-right: 4px; }
.dis { width: 46px; }
.tbody .gl { height: 21px; line-height: 20px; }

.right { display: flex; flex-direction: column; border-left: 1px solid #1e1e20; min-width: 0; overflow: hidden; }
.acc { height: 28px; flex: none; background: #232325; border-bottom: 1px solid #1c1c1e; padding-left: 4px; text-align: left; font: 700 14px/27px "Noto Sans", sans-serif; color: #c0c0c0; margin-right: 1px; }
.rto { display: flex; justify-content: space-between; }
.rto .b { width: 49px; border-radius: 2px; font: 13px "Open Sans", sans-serif; color: #a8a8a8; }
.help { flex: 1; min-height: 0; background: #343436; padding: 2px 4px 0 6px; }
.tips { height: 205px; }
.tips p { margin: 4px 0 0 4px; line-height: 17px; }
.mi .b { height: 27px; margin: 3px 4px 0 4px; border-radius: 2px; }
.keys { display: grid; grid-template-columns: 107px 1fr; padding: 3px 0 0 6px; }
.vscroll { background: #1e1e20; }
.vscroll i { display: block; height: 53%; background: #343436; }

.status { height: 42px; background: #343436; border: solid #1c1c1e; border-width: 1px 0; display: flex; gap: 2px; padding: 4px 0 0 4px; flex: none; }
.info { width: 230px; height: 32px; margin: 0 2px; background: #1e1e20; border-radius: 3px; padding: 3px 2px 2px; line-height: 14px; flex: none; }
.cnt { display: grid; grid-template-columns: 76px 77px 1fr; }
.stretch { width: 120px; flex: none; }
.stretch :deep(select) { text-align: left; text-align-last: left; padding-right: 14px; }
.ramp { flex: 1; position: relative; height: 32px; background: #2a2a2c; margin-left: -2px; }
.bar { height: 16px; background: linear-gradient(to right, #2c2c2e 1%, #c80404 11.2%, #b82424 22.8%, #858585 51.7%, #0058c8 92.5%, #2c2c2e 100%); }
.neutral { position: absolute; left: 51.7%; transform: translateX(-50%); color: #000; }
.neutral::before, .neutral::after { content: ""; position: absolute; left: calc(50% - 5px); top: 0; border: 5px solid transparent; border-top-color: #000; border-bottom: 0; }
.neutral::after { top: 11px; border: 5px solid transparent; border-bottom-color: #000; border-top: 0; }
.tick { position: absolute; top: 17px; transform: translateX(-50%); color: #000; }
.tick::before, .tick::after { content: ""; position: absolute; left: 50%; top: -17px; width: 1px; height: 4px; background: #000; }
.tick::after { top: -5px; height: 5px; }
.foot { height: 28px; background: #1e1e20; display: flex; gap: 2px; flex: none; line-height: 26px; }
.foot .b { background: #2a2a2c; border-radius: 3px; padding: 0 5px; }
.about { flex: 1; background: #343436; line-height: 26px; padding-left: 6px; margin-left: -2px; color: #000; }
</style>
